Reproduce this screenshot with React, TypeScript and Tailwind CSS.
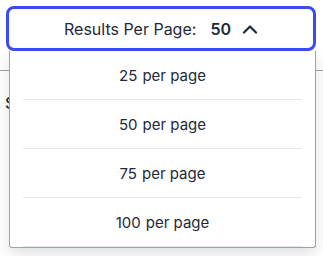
import React from "react";

const options = [25, 50, 75, 100];

export default function App() {
  return (
    <div
      className="relative h-[256px] w-[323px] overflow-hidden bg-white"
      style={{ fontFamily: "Inter, 'Noto Sans', sans-serif" }}
    >
      {/* page content under the menu */}
      <div className="pt-[70px]">
        <div className="border-t border-[#9ca3af]" />
        <div className="mt-[20px] pl-[5px] text-[16px] font-medium text-[#1f2937]">
          Sort by
        </div>
      </div>

      {/* dropdown */}
      <div className="absolute left-[6px] top-[6px] w-[310px]">
        <button className="flex h-[45px] w-full items-center justify-center rounded-[8px] border-[3px] border-[#3b4cf5] bg-white text-[16px] text-[#1f2937]">
          <span>Results Per Page:</span>
          <span className="ml-[14px] font-semibold">50</span>
          <svg
            className="ml-[11px]"
            width="16"
            height="10"
            viewBox="0 0 16 10"
            fill="none"
            stroke="#1f2937"
            strokeWidth="2.2"
            strokeLinecap="round"
            strokeLinejoin="round"
          >
            <path d="M2 8.5 L8 2.5 L14 8.5" />
          </svg>
        </button>
        <ul className="ml-[3px] w-[307px] rounded-b-[3px] border border-t-0 border-[#9ca3af] bg-white shadow-[0_6px_14px_rgba(0,0,0,0.12)]">
          {options.map((n) => (
            <li key={n} className="mx-[13px] border-b border-[#e5e7eb]">
              <div className="flex h-[48px] items-center justify-center gap-[5px] pt-[2px] text-[15px] text-[#1f2937]">
                <span>{n}</span>
                <span>per page</span>
              </div>
            </li>
          ))}
        </ul>
      </div>
    </div>
  );
}
